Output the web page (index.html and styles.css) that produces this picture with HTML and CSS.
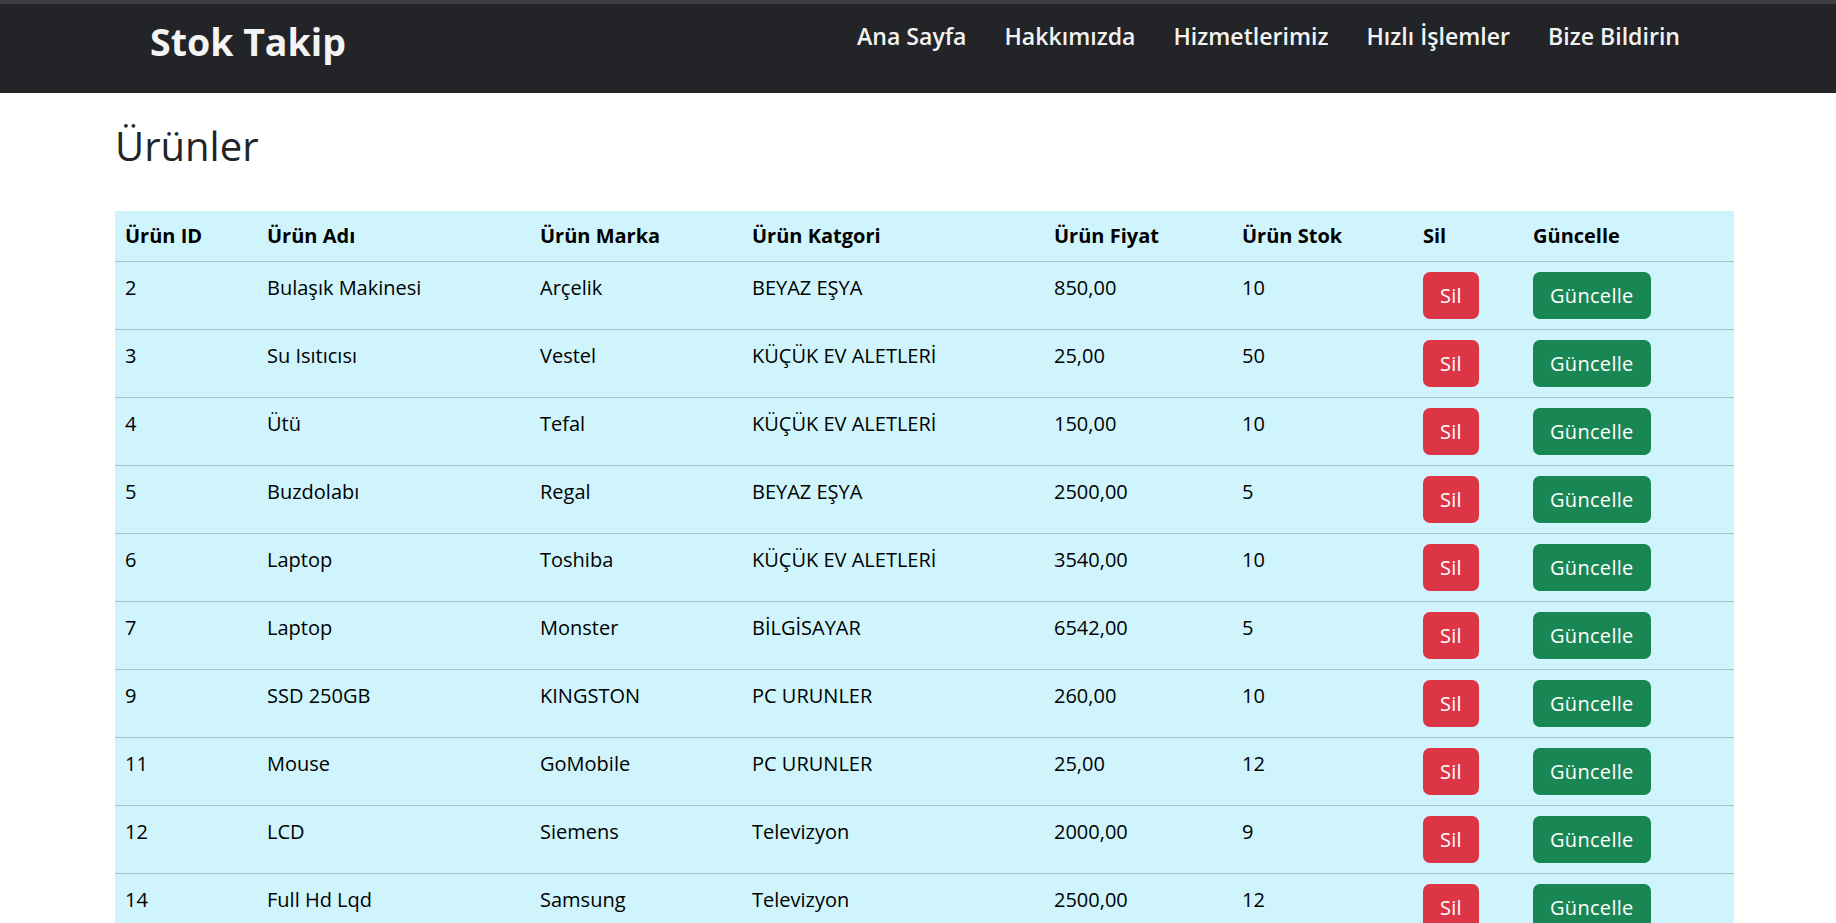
FILE: index.html
```html
<!DOCTYPE html>
<html lang="tr">
<head>
<meta charset="utf-8">
<title>Stok Takip</title>
<link rel="stylesheet" href="styles.css">
</head>
<body>
<div class="topline"></div>
<header class="navbar">
  <div class="nav-inner">
    <a class="brand" href="#">Stok Takip</a>
    <nav class="links">
      <a href="#">Ana Sayfa</a>
      <a href="#">Hakkımızda</a>
      <a href="#">Hizmetlerimiz</a>
      <a href="#">Hızlı İşlemler</a>
      <a href="#">Bize Bildirin</a>
    </nav>
  </div>
</header>
<main class="container">
  <h1 class="title">Ürünler</h1>
  <table class="products">
    <colgroup>
      <col class="c1"><col class="c2"><col class="c3"><col class="c4"><col class="c5"><col class="c6"><col class="c7"><col class="c8">
    </colgroup>
    <thead>
      <tr><th>Ürün ID</th><th>Ürün Adı</th><th>Ürün Marka</th><th>Ürün Katgori</th><th>Ürün Fiyat</th><th>Ürün Stok</th><th>Sil</th><th>Güncelle</th></tr>
    </thead>
    <tbody>
      <tr><td>2</td><td>Bulaşık Makinesi</td><td>Arçelik</td><td>BEYAZ EŞYA</td><td>850,00</td><td>10</td><td><a class="btn btn-del" href="#">Sil</a></td><td><a class="btn btn-upd" href="#">Güncelle</a></td></tr>
      <tr><td>3</td><td>Su Isıtıcısı</td><td>Vestel</td><td>KÜÇÜK EV ALETLERİ</td><td>25,00</td><td>50</td><td><a class="btn btn-del" href="#">Sil</a></td><td><a class="btn btn-upd" href="#">Güncelle</a></td></tr>
      <tr><td>4</td><td>Ütü</td><td>Tefal</td><td>KÜÇÜK EV ALETLERİ</td><td>150,00</td><td>10</td><td><a class="btn btn-del" href="#">Sil</a></td><td><a class="btn btn-upd" href="#">Güncelle</a></td></tr>
      <tr><td>5</td><td>Buzdolabı</td><td>Regal</td><td>BEYAZ EŞYA</td><td>2500,00</td><td>5</td><td><a class="btn btn-del" href="#">Sil</a></td><td><a class="btn btn-upd" href="#">Güncelle</a></td></tr>
      <tr><td>6</td><td>Laptop</td><td>Toshiba</td><td>KÜÇÜK EV ALETLERİ</td><td>3540,00</td><td>10</td><td><a class="btn btn-del" href="#">Sil</a></td><td><a class="btn btn-upd" href="#">Güncelle</a></td></tr>
      <tr><td>7</td><td>Laptop</td><td>Monster</td><td>BİLGİSAYAR</td><td>6542,00</td><td>5</td><td><a class="btn btn-del" href="#">Sil</a></td><td><a class="btn btn-upd" href="#">Güncelle</a></td></tr>
      <tr><td>9</td><td>SSD 250GB</td><td>KINGSTON</td><td>PC URUNLER</td><td>260,00</td><td>10</td><td><a class="btn btn-del" href="#">Sil</a></td><td><a class="btn btn-upd" href="#">Güncelle</a></td></tr>
      <tr><td>11</td><td>Mouse</td><td>GoMobile</td><td>PC URUNLER</td><td>25,00</td><td>12</td><td><a class="btn btn-del" href="#">Sil</a></td><td><a class="btn btn-upd" href="#">Güncelle</a></td></tr>
      <tr><td>12</td><td>LCD</td><td>Siemens</td><td>Televizyon</td><td>2000,00</td><td>9</td><td><a class="btn btn-del" href="#">Sil</a></td><td><a class="btn btn-upd" href="#">Güncelle</a></td></tr>
      <tr><td>14</td><td>Full Hd Lqd</td><td>Samsung</td><td>Televizyon</td><td>2500,00</td><td>12</td><td><a class="btn btn-del" href="#">Sil</a></td><td><a class="btn btn-upd" href="#">Güncelle</a></td></tr>
    </tbody>
  </table>
</main>
</body>
</html>
```
FILE: styles.css
```css
html { overflow: hidden; }
* { box-sizing: border-box; }
body {
  margin: 0;
  background: #ffffff;
  color: #212529;
  font-family: "Open Sans", Inter, sans-serif;
  font-size: 20px;
  line-height: 1.5;
}
a { text-decoration: none; color: inherit; }

.topline { height: 4px; background: #3d3e40; }

.navbar { background: #232427; height: 89px; }
.nav-inner {
  display: flex;
  justify-content: space-between;
  align-items: flex-start;
  padding: 0 156px 0 150px;
  height: 100%;
}
.brand {
  color: #f4f4f5;
  font-weight: 700;
  font-size: 37.5px;
  line-height: 44px;
  padding-top: 16px;
}
.links {
  display: flex;
  gap: 38px;
  padding-top: 17px;
}
.links a {
  color: #f2f2f2;
  font-weight: 600;
  font-size: 23.1px;
  line-height: 30px;
}

.container {
  margin-left: 115px;
  width: 1619px;
}
.title {
  margin: 0;
  padding-top: 25px;
  font-size: 40px;
  font-weight: 400;
  line-height: 56px;
  height: 118px;
}

.products {
  width: 1619px;
  table-layout: fixed;
  border-collapse: collapse;
  background: #cff4fc;
  color: #000;
}
.c1 { width: 142px; }
.c2 { width: 273px; }
.c3 { width: 212px; }
.c4 { width: 302px; }
.c5 { width: 188px; }
.c6 { width: 181px; }
.c7 { width: 110px; }
.c8 { width: 211px; }

.products th {
  text-align: left;
  font-weight: 700;
  padding: 10px;
  line-height: 30px;
  border-bottom: 1px solid #a6c3ca;
}
.products td {
  vertical-align: top;
  padding: 10px;
  line-height: 32px;
  border-bottom: 1px solid #a6c3ca;
  height: 68px;
}
.btn {
  display: inline-block;
  vertical-align: top;
  color: #fff;
  font-size: 20px;
  letter-spacing: 0.3px;
  line-height: 28px;
  padding: 9.5px 17px;
  border-radius: 7px;
}
.btn-del { background: #dc3545; }
.btn-upd { background: #198754; }
```
